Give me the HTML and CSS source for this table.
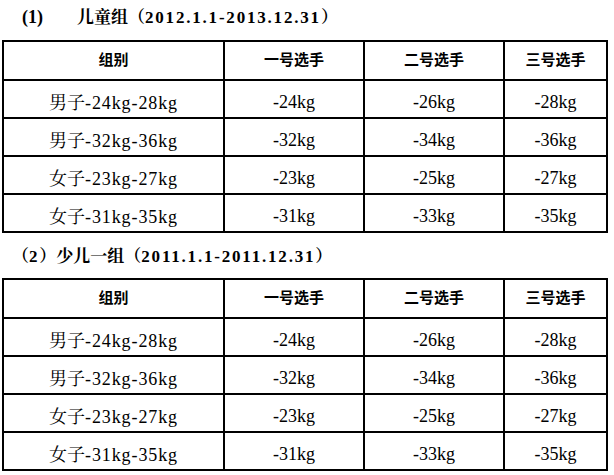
FILE: index.html
```html
<!DOCTYPE html>
<html>
<head>
<meta charset="utf-8">
<link rel="stylesheet" href="styles.css">
</head>
<body>
<div class="page">
  <h2 class="title title-1"><span class="num">(1)</span><span class="cn">儿童组</span><span class="paren">（</span><span class="date">2012.1.1-2013.12.31</span><span class="paren">）</span></h2>
  <table class="grid">
    <colgroup><col class="c1"><col class="c2"><col class="c3"><col class="c4"></colgroup>
    <thead>
      <tr><th>组别</th><th>一号选手</th><th>二号选手</th><th>三号选手</th></tr>
    </thead>
    <tbody>
      <tr><td class="group">男子<span class="lat">-24kg-28kg</span></td><td>-24kg</td><td>-26kg</td><td>-28kg</td></tr>
      <tr><td class="group">男子<span class="lat">-32kg-36kg</span></td><td>-32kg</td><td>-34kg</td><td>-36kg</td></tr>
      <tr><td class="group">女子<span class="lat">-23kg-27kg</span></td><td>-23kg</td><td>-25kg</td><td>-27kg</td></tr>
      <tr><td class="group">女子<span class="lat">-31kg-35kg</span></td><td>-31kg</td><td>-33kg</td><td>-35kg</td></tr>
    </tbody>
  </table>
  <h2 class="title title-2"><span class="paren">（</span><span class="date">2</span><span class="paren">）</span><span class="cn">少儿一组</span><span class="paren">（</span><span class="date">2011.1.1-2011.12.31</span><span class="paren">）</span></h2>
  <table class="grid">
    <colgroup><col class="c1"><col class="c2"><col class="c3"><col class="c4"></colgroup>
    <thead>
      <tr><th>组别</th><th>一号选手</th><th>二号选手</th><th>三号选手</th></tr>
    </thead>
    <tbody>
      <tr><td class="group">男子<span class="lat">-24kg-28kg</span></td><td>-24kg</td><td>-26kg</td><td>-28kg</td></tr>
      <tr><td class="group">男子<span class="lat">-32kg-36kg</span></td><td>-32kg</td><td>-34kg</td><td>-36kg</td></tr>
      <tr><td class="group">女子<span class="lat">-23kg-27kg</span></td><td>-23kg</td><td>-25kg</td><td>-27kg</td></tr>
      <tr><td class="group">女子<span class="lat">-31kg-35kg</span></td><td>-31kg</td><td>-33kg</td><td>-35kg</td></tr>
    </tbody>
  </table>
</div>
</body>
</html>
```

FILE: styles.css
```css
html, body {
  margin: 0;
  padding: 0;
  background: #ffffff;
}

body {
  font-family: "Liberation Serif", "Noto Serif CJK SC", serif;
  color: #000000;
}

.page {
  padding: 0 0 0 2px;
  width: 604px;
}

.title {
  margin: 0;
  font-weight: bold;
  font-size: 17px;
  line-height: 20px;
  white-space: nowrap;
  font-family: "Liberation Serif", "Noto Serif CJK SC", serif;
}

.title-1 {
  padding: 6px 0 12px 20px;
}

.title-2 {
  padding: 12px 0 11px 10px;
}

.title .num {
  font-size: 18px;
  margin-right: 34px;
}

.title .cn,
.title .paren {
  font-family: "Noto Serif CJK SC", serif;
  font-weight: bold;
  font-size: 17px;
}

.title .date {
  letter-spacing: 1.8px;
}

.grid {
  border-collapse: collapse;
  width: 604px;
  table-layout: fixed;
}

.grid .c1 { width: 221px; }
.grid .c2 { width: 140px; }
.grid .c3 { width: 140px; }
.grid .c4 { width: 103px; }

.grid th,
.grid td {
  border: 2px solid #000000;
  text-align: center;
  padding: 0;
  height: 38px;
  box-sizing: border-box;
  white-space: nowrap;
}

.grid th {
  font-family: "Noto Sans CJK SC", sans-serif;
  font-weight: bold;
  font-size: 15px;
  line-height: 20px;
  height: 39px;
  padding-bottom: 3px;
}

.grid td {
  font-family: "Liberation Serif", serif;
  font-size: 18px;
  line-height: 20px;
  padding-top: 5px;
}

.grid td.group {
  font-family: "Noto Serif CJK SC", serif;
  font-size: 18px;
  font-weight: normal;
}

.grid td.group .lat {
  font-family: "Liberation Serif", serif;
  letter-spacing: 0.9px;
}
```
